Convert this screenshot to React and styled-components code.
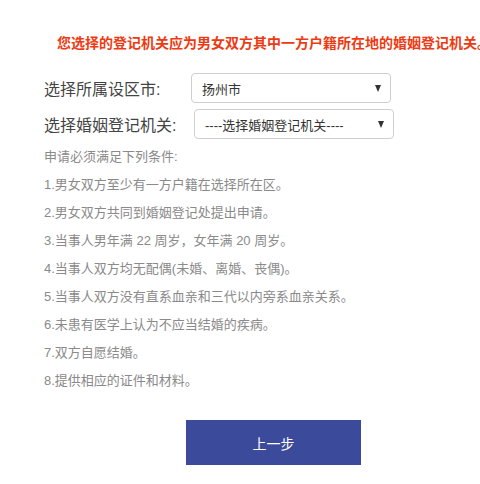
import styled, { createGlobalStyle } from 'styled-components';

const GlobalStyle = createGlobalStyle`
  body {
    margin: 0;
    background: #fff;
    font-family: 'Liberation Sans', 'Noto Sans CJK SC', sans-serif;
    overflow: hidden;
  }
`;

const Page = styled.div`
  width: 480px;
  height: 484px;
  overflow: hidden;
  padding-top: 33px;
  box-sizing: border-box;
`;

const Notice = styled.p`
  margin: 0 0 20px 57px;
  font-size: 14px;
  line-height: 20px;
  font-weight: bold;
  color: #ee3a12;
  white-space: nowrap;
`;

const Form = styled.div`
  display: flex;
  flex-direction: column;
  gap: 6px;
  padding-left: 44px;
`;

const Row = styled.div`
  display: flex;
  align-items: center;
`;

const Label = styled.span`
  width: ${(p) => p.$width}px;
  font-size: 16px;
  color: #444;
  white-space: nowrap;
`;

const Select = styled.div`
  width: 200px;
  height: 30px;
  box-sizing: border-box;
  border: 1px solid #cfcfcf;
  border-radius: 4px;
  display: flex;
  align-items: center;
  justify-content: space-between;
  padding: 0 9px 0 10px;
  font-size: 13px;
  color: #333;
`;

const Arrow = styled.span`
  width: 0;
  height: 0;
  border-left: 3.5px solid transparent;
  border-right: 3.5px solid transparent;
  border-top: 7px solid #333;
`;

const Conditions = styled.ul`
  list-style: none;
  margin: 4px 0 0;
  padding: 0 0 0 44px;
`;

const Item = styled.li`
  font-size: 13px;
  line-height: 28px;
  color: #8a8a8a;
  white-space: nowrap;
`;

const BackButton = styled.button`
  display: block;
  margin: 25px 0 0 186px;
  width: 175px;
  height: 45px;
  border: none;
  background: #3c4a9b;
  color: #fff;
  font-family: 'Liberation Sans', 'Noto Sans CJK SC', sans-serif;
  font-size: 14px;
  cursor: pointer;
`;

const conditions = [
  '申请必须满足下列条件:',
  '1.男女双方至少有一方户籍在选择所在区。',
  '2.男女双方共同到婚姻登记处提出申请。',
  '3.当事人男年满 22 周岁，女年满 20 周岁。',
  '4.当事人双方均无配偶(未婚、离婚、丧偶)。',
  '5.当事人双方没有直系血亲和三代以内旁系血亲关系。',
  '6.未患有医学上认为不应当结婚的疾病。',
  '7.双方自愿结婚。',
  '8.提供相应的证件和材料。',
];

export default function App() {
  return (
    <Page>
      <GlobalStyle />
      <Notice>您选择的登记机关应为男女双方其中一方户籍所在地的婚姻登记机关。</Notice>
      <Form>
        <Row>
          <Label $width={147}>选择所属设区市:</Label>
          <Select>
            扬州市
            <Arrow />
          </Select>
        </Row>
        <Row>
          <Label $width={150}>选择婚姻登记机关:</Label>
          <Select>
            ----选择婚姻登记机关----
            <Arrow />
          </Select>
        </Row>
      </Form>
      <Conditions>
        {conditions.map((c) => (
          <Item key={c}>{c}</Item>
        ))}
      </Conditions>
      <BackButton>上一步</BackButton>
    </Page>
  );
}
